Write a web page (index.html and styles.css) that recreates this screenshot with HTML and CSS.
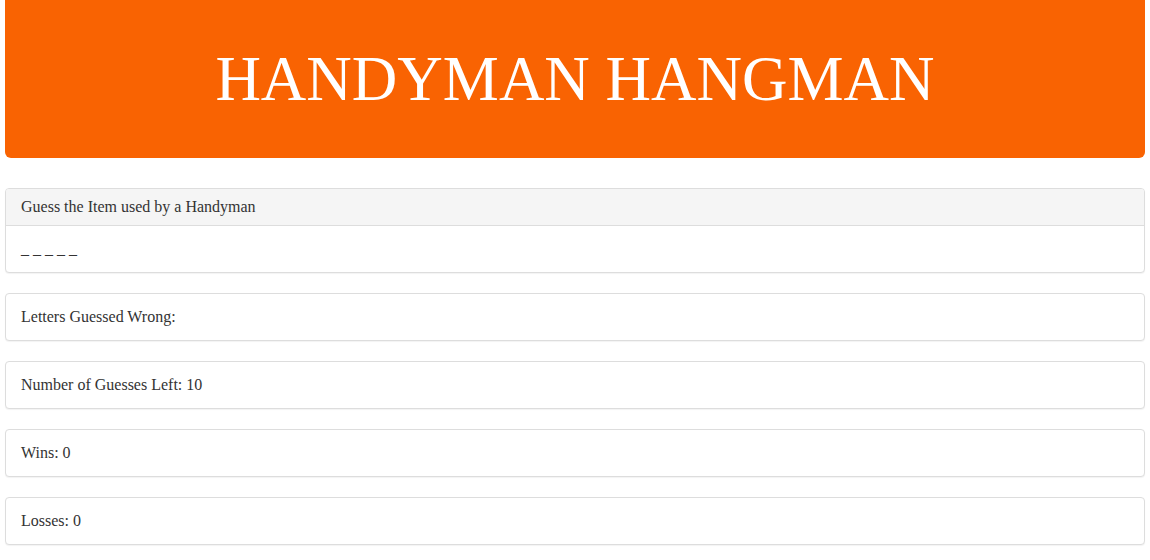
FILE: index.html
```html
<!DOCTYPE html>
<html lang="en">
<head>
<meta charset="utf-8">
<title>Handyman Hangman</title>
<link rel="stylesheet" href="styles.css">
</head>
<body>
<div class="page">
  <header class="jumbotron">
    <h1 class="title">HANDYMAN HANGMAN</h1>
  </header>
  <section class="panel">
    <div class="panel-heading">Guess the Item used by a Handyman</div>
    <div class="panel-body">_ _ _ _ _</div>
  </section>
  <section class="panel">
    <div class="panel-body">Letters Guessed Wrong: </div>
  </section>
  <section class="panel">
    <div class="panel-body">Number of Guesses Left: 10</div>
  </section>
  <section class="panel">
    <div class="panel-body">Wins: 0</div>
  </section>
  <section class="panel">
    <div class="panel-body">Losses: 0</div>
  </section>
</div>
</body>
</html>
```
FILE: styles.css
```css
html, body {
  margin: 0;
  padding: 0;
  background: #fff;
}
body {
  font-family: "Liberation Serif", "Times New Roman", serif;
  font-size: 16px;
  line-height: 16px;
  color: #333;
}
.page {
  padding: 0 5px;
}
.jumbotron {
  background: #f96302;
  border-radius: 0 0 6px 6px;
  height: 158px;
  margin-bottom: 30px;
  display: flex;
  align-items: center;
  justify-content: center;
}
.title {
  margin: 0;
  color: #fff;
  font-weight: normal;
  font-size: 63px;
  line-height: 1;
  text-align: center;
}
.panel {
  border: 1px solid #ddd;
  border-radius: 4px;
  margin-bottom: 20px;
  box-shadow: 0 1px 1px rgba(0,0,0,0.05);
  background: #fff;
}
.panel-heading {
  background: #f5f5f5;
  border-bottom: 1px solid #ddd;
  border-radius: 3px 3px 0 0;
  padding: 10px 15px;
}
.panel-body {
  padding: 15px;
}
```
